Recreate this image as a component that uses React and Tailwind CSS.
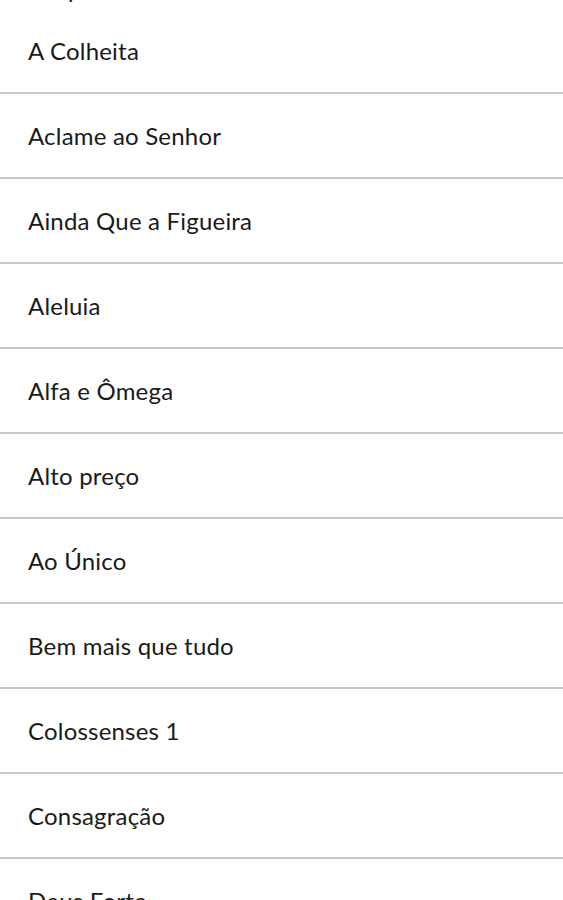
const songs = [
  'A Colheita',
  'Aclame ao Senhor',
  'Ainda Que a Figueira',
  'Aleluia',
  'Alfa e Ômega',
  'Alto preço',
  'Ao Único',
  'Bem mais que tudo',
  'Colossenses 1',
  'Consagração',
  'Deus Forte',
  'Deus de Promessas',
]

export default function App() {
  return (
    <div className="h-[900px] overflow-hidden bg-white font-['Lato',sans-serif] text-[#1a1a1a]">
      {/* section header, scrolled mostly out of view */}
      <div className="h-[9px] overflow-hidden flex items-end px-[28px]">
        <span className="text-[24px] leading-[24px] mb-[8px] tracking-[0.2px]">Grupo</span>
      </div>

      <ul>
        {songs.map(s => (
          <li key={s} className="h-[85px] flex items-center px-[28px] border-b-2 border-[#c8c8c8]">
            <span className="text-[24px] leading-none tracking-[0.2px]">{s}</span>
          </li>
        ))}
      </ul>
    </div>
  )
}
